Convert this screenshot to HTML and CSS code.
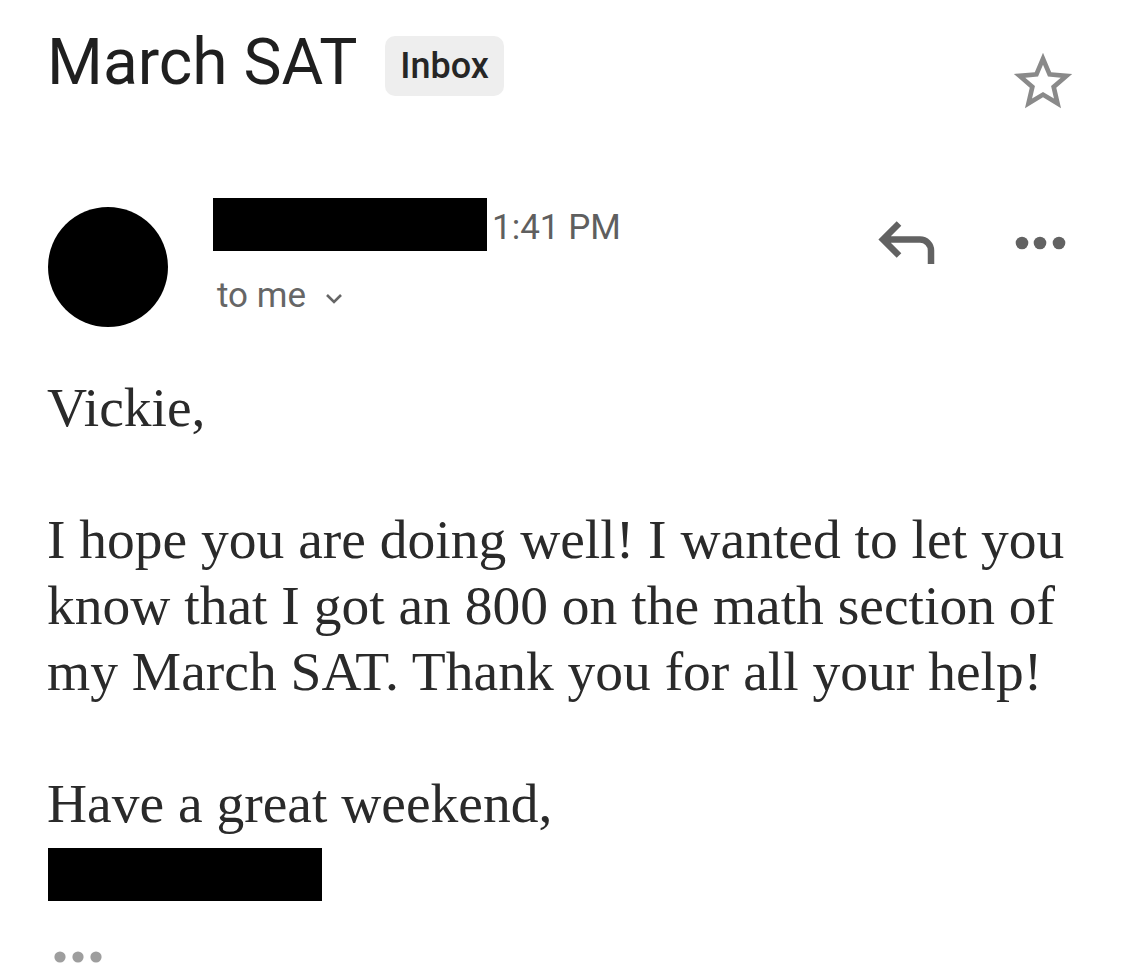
FILE: index.html
```html
<!DOCTYPE html>
<html lang="en">
<head>
<meta charset="utf-8">
<title>March SAT</title>
<link rel="stylesheet" href="styles.css">
</head>
<body>
<main class="mail">
  <header class="subject-row">
    <h1 class="subject">March SAT</h1>
    <span class="chip">Inbox</span>
    <button class="star" aria-label="Star">
      <svg width="70" height="70" viewBox="0 0 24 24"><path fill="#8a8a8a" d="M22 9.24l-7.19-.62L12 2 9.19 8.63 2 9.24l5.46 4.73L5.820 21 12 17.27 18.18 21l-1.630-7.03L22 9.24zM12 15.4l-3.76 2.27 1-4.28-3.32-2.88 4.38-.38L12 6.1l1.71 4.04 4.38.38-3.32 2.88 1 4.28L12 15.4z"/></svg>
    </button>
  </header>

  <section class="sender-row">
    <div class="avatar"></div>
    <div class="meta">
      <div class="meta-top">
        <span class="redact name-redact"></span>
        <span class="time">1:41 PM</span>
      </div>
      <div class="recipients">to me
        <svg class="chev" width="20" height="12" viewBox="0 0 20 12"><path d="M3 2 L10 9 L17 2" fill="none" stroke="#666" stroke-width="2.6"/></svg>
      </div>
    </div>
    <div class="actions">
      <svg class="reply" width="64" height="48" viewBox="0 0 64 48"><path d="M25 5.5 L9 21.5 L25 37.5 M9 21.5 H46 A11 11 0 0 1 57 32.5 V46" fill="none" stroke="#626262" stroke-width="6.5" stroke-linejoin="miter"/></svg>
      <svg class="more" width="52" height="16" viewBox="0 0 52 16"><circle cx="7" cy="8" r="6.3" fill="#626262"/><circle cx="25" cy="8" r="6.3" fill="#626262"/><circle cx="44" cy="8" r="6.3" fill="#626262"/></svg>
    </div>
  </section>

  <article class="body">
    <p>Vickie,</p>
    <p>I hope you are doing well! I wanted to let you know that I got an 800 on the math section of my March SAT. Thank you for all your help!</p>
    <p>Have a great weekend,</p>
    <div class="redact sig-redact"></div>
    <svg class="trim" width="50" height="14" viewBox="0 0 50 14"><circle cx="7" cy="7" r="5.6" fill="#9e9e9e"/><circle cx="25" cy="7" r="5.6" fill="#9e9e9e"/><circle cx="43" cy="7" r="5.6" fill="#9e9e9e"/></svg>
  </article>
</main>
</body>
</html>
```

FILE: styles.css
```css
html, body {
  margin: 0;
  padding: 0;
  background: #ffffff;
}

.mail {
  width: 1125px;
  box-sizing: border-box;
  padding: 27px 45px 0 47px;
  font-family: Roboto, "Liberation Sans", Arial, sans-serif;
}

.subject-row {
  display: flex;
  align-items: flex-start;
}

.subject {
  margin: 0;
  font-size: 64px;
  line-height: 72px;
  font-weight: 400;
  letter-spacing: 0;
  color: #1f1f1f;
}

.chip {
  margin-left: 28px;
  margin-top: 9px;
  height: 60px;
  padding: 0 15px;
  box-sizing: border-box;
  display: flex;
  align-items: center;
  background: #eeeeee;
  border-radius: 10px;
  font-size: 36px;
  font-weight: 500;
  color: #262626;
}

.star {
  margin-left: auto;
  margin-right: 2px;
  margin-top: 20px;
  padding: 0;
  border: 0;
  background: none;
  display: block;
  line-height: 0;
}

.sender-row {
  display: flex;
  align-items: flex-start;
  margin-top: 81px;
}

.avatar {
  width: 120px;
  height: 120px;
  border-radius: 50%;
  background: #000;
  margin-top: 9px;
  margin-left: 1px;
  flex: none;
}

.meta {
  margin-left: 45px;
  display: flex;
  flex-direction: column;
}

.meta-top {
  display: flex;
  align-items: flex-start;
}

.redact {
  background: #000;
  display: block;
}

.name-redact {
  width: 274px;
  height: 53px;
}

.time {
  margin-left: 5px;
  margin-top: 4px;
  font-size: 35px;
  line-height: 52px;
  color: #5f5f5f;
}

.recipients {
  margin-top: 22px;
  margin-left: 4px;
  font-size: 35px;
  line-height: 40px;
  color: #666;
  display: flex;
  align-items: center;
}

.chev {
  margin-left: 18px;
  margin-top: 6px;
}

.actions {
  margin-left: auto;
  display: flex;
  align-items: flex-start;
}

.reply {
  margin-top: 20px;
  margin-right: 77px;
}

.more {
  margin-top: 37px;
  margin-right: 13px;
}

.body {
  margin-top: 48px;
  font-family: "Liberation Serif", "Times New Roman", serif;
  font-size: 55.5px;
  line-height: 66px;
  color: #2a2a2a;
}

.body p {
  margin: 0 0 66px 0;
  width: 1030px;
}

.body p:nth-of-type(3) {
  margin-bottom: 0;
}

.sig-redact {
  width: 274px;
  height: 53px;
  margin-top: 11px;
  margin-left: 1px;
}

.trim {
  display: block;
  margin-top: 49px;
  margin-left: 6px;
}
```
